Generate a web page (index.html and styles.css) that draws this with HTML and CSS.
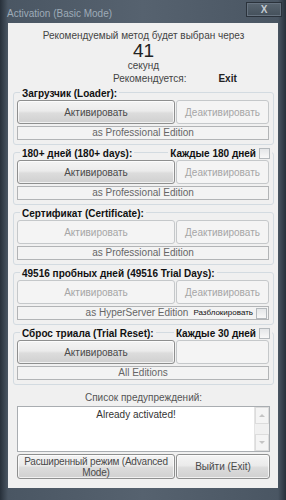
FILE: index.html
```html
<!DOCTYPE html>
<html lang="ru">
<head>
    <meta charset="UTF-8">
    <title>Activation (Basic Mode)</title>
    <link rel="stylesheet" href="styles.css">
</head>
<body>
    <div class="window">
        <div class="titlebar">
            <span class="title">Activation (Basic Mode)</span>
            <span class="close">X</span>
        </div>

        <div class="client">
            <div class="countdown">
                <div class="line">Рекомендуемый метод будет выбран через</div>
                <div class="seconds">41</div>
                <div class="line">секунд</div>
                <div class="recommend">
                    <span>Рекомендуется:</span>
                    <b>Exit</b>
                </div>
            </div>

            <div class="group">
                <div class="group-head">
                    <span class="legend">Загрузчик (Loader):</span>
                </div>
                <div class="btn-row">
                    <button class="btn btn-main">Активировать</button>
                    <button class="btn btn-side" disabled>Деактивировать</button>
                </div>
                <div class="edition">as Professional Edition</div>
            </div>

            <div class="group">
                <div class="group-head">
                    <span class="legend">180+ дней (180+ days):</span>
                    <span class="legend check-label">Каждые 180 дней <span class="checkbox"></span></span>
                </div>
                <div class="btn-row">
                    <button class="btn btn-main">Активировать</button>
                    <button class="btn btn-side" disabled>Деактивировать</button>
                </div>
                <div class="edition">as Professional Edition</div>
            </div>

            <div class="group">
                <div class="group-head">
                    <span class="legend">Сертификат (Certificate):</span>
                </div>
                <div class="btn-row">
                    <button class="btn btn-main" disabled>Активировать</button>
                    <button class="btn btn-side" disabled>Деактивировать</button>
                </div>
                <div class="edition">as Professional Edition</div>
            </div>

            <div class="group">
                <div class="group-head">
                    <span class="legend">49516 пробных дней (49516 Trial Days):</span>
                </div>
                <div class="btn-row">
                    <button class="btn btn-main" disabled>Активировать</button>
                    <button class="btn btn-side" disabled>Деактивировать</button>
                </div>
                <div class="edition edition-unlock">
                    as HyperServer Edition
                    <span class="unlock">Разблокировать <span class="checkbox"></span></span>
                </div>
            </div>

            <div class="group">
                <div class="group-head">
                    <span class="legend">Сброс триала (Trial Reset):</span>
                    <span class="legend check-label">Каждые 30 дней <span class="checkbox"></span></span>
                </div>
                <div class="btn-row">
                    <button class="btn btn-main">Активировать</button>
                    <button class="btn btn-side" disabled></button>
                </div>
                <div class="edition">All Editions</div>
            </div>

            <div class="warnings-title">Список предупреждений:</div>
            <div class="warnings">
                <div class="warnings-text">Already activated!</div>
                <div class="scrollbar">
                    <span class="arrow arrow-up"></span>
                    <span class="track"></span>
                    <span class="arrow arrow-down"></span>
                </div>
            </div>

            <div class="btn-row bottom-row">
                <button class="btn btn-main">Расширенный режим (Advanced<br>Mode)</button>
                <button class="btn btn-side">Выйти (Exit)</button>
            </div>
        </div>
    </div>
</body>
</html>
```

FILE: styles.css
```css
body {
    margin: 0;
    background-color: #2e3741;
    font-family: 'Liberation Sans', Arial, sans-serif;
}
.window {
    width: 286px;
    height: 500px;
    background: linear-gradient(to right, #27303a 0px, #4a5663 8px, #56626f 50%, #4a5663 278px, #27303a 286px);
    overflow: hidden;
}
.titlebar {
    height: 23px;
    display: flex;
    align-items: flex-start;
    padding: 0 4px 0 7px;
    box-sizing: border-box;
}
.title {
    font-size: 10px;
    color: #9eabb8;
    margin-top: 8px;
}
.close {
    margin-left: auto;
    margin-top: 2px;
    width: 34px;
    height: 13px;
    border: 1px solid #2a323b;
    box-shadow: inset 0 0 0 1px #66727f;
    background: linear-gradient(#58646f, #44505b);
    color: #c4ccd4;
    font-size: 10px;
    font-weight: bold;
    text-align: center;
    line-height: 13px;
}
.client {
    margin: 0 8px;
    height: 465px;
    background-color: #f0f0f0;
    padding: 6px 4px 0 5px;
    box-sizing: border-box;
    color: #222;
}

/* countdown header */
.countdown {
    text-align: center;
    font-size: 10px;
    color: #444;
}
.countdown .line {
    line-height: 13px;
}
.seconds {
    font-size: 19px;
    line-height: 17px;
    color: #222;
}
.recommend {
    display: flex;
    line-height: 13px;
    padding-left: 100px;
    text-align: left;
}
.recommend b {
    margin-left: 32px;
    font-size: 10px;
    color: #222;
}

/* groups */
.group {
    margin-top: 7px;
    border: 1px solid #d3dbe1;
    border-radius: 3px;
    padding: 0 4px 4px 3px;
}
.group-head {
    display: flex;
    justify-content: space-between;
    align-items: center;
    height: 14px;
    margin-top: -7px;
}
.legend {
    background-color: #f0f0f0;
    font-size: 10px;
    font-weight: bold;
    color: #111;
    padding: 0 2px;
    margin-left: 3px;
}
.check-label {
    display: flex;
    align-items: center;
    gap: 3px;
    margin-left: 0;
    margin-right: -3px;
}
.checkbox {
    display: inline-block;
    width: 9px;
    height: 9px;
    border: 1px solid #b4b9bd;
    background: linear-gradient(#e4e6e8, #f8f8f8);
}
.btn-row {
    display: flex;
    gap: 1px;
}
.btn {
    height: 24px;
    padding: 0;
    font-family: inherit;
    font-size: 10px;
    color: #4a4a4a;
    border: 1px solid #8e8f8f;
    border-radius: 3px;
    background: linear-gradient(#f4f4f4 0%, #ebebeb 45%, #dcdcdc 55%, #d0d0d0 100%);
    box-shadow: inset 0 0 0 1px rgba(255, 255, 255, 0.7);
}
.btn:disabled {
    color: #a6a6a6;
    border-color: #c5c8ca;
    background: #f4f4f4;
    box-shadow: none;
}
.btn-main {
    width: 158px;
}
.btn-side {
    flex: 1;
}
.edition {
    margin-top: 2px;
    height: 14px;
    box-sizing: border-box;
    border: 1px solid #b2b4b6;
    background-color: #f3f3f3;
    font-size: 10px;
    line-height: 12px;
    color: #666;
    text-align: center;
}
.edition-unlock {
    position: relative;
    padding-right: 12px;
}
.unlock {
    position: absolute;
    right: 1px;
    top: 0;
    display: flex;
    align-items: center;
    gap: 3px;
    height: 12px;
    background-color: #f3f3f3;
    font-size: 8px;
    color: #111;
}

/* warnings list */
.warnings-title {
    margin-top: 6px;
    text-align: center;
    font-size: 10px;
    line-height: 13px;
    color: #555;
}
.warnings {
    margin: 2px 0 0 4px;
    width: 253px;
    height: 46px;
    box-sizing: border-box;
    border: 1px solid #a9adb1;
    background-color: #fff;
    display: flex;
}
.warnings-text {
    flex: 1;
    text-align: center;
    font-size: 10px;
    line-height: 13px;
    color: #333;
    padding-top: 1px;
}
.scrollbar {
    width: 14px;
    display: flex;
    flex-direction: column;
    background-color: #f0f0f0;
    border-left: 1px solid #e4e4e4;
}
.arrow {
    height: 15px;
    border: 1px solid #dcdcdc;
    background-color: #f4f4f4;
    display: flex;
    align-items: center;
    justify-content: center;
}
.arrow::before {
    content: "";
    border-left: 3px solid transparent;
    border-right: 3px solid transparent;
}
.arrow-up::before {
    border-bottom: 3px solid #c4c4c4;
}
.arrow-down::before {
    border-top: 3px solid #c4c4c4;
}
.track {
    flex: 1;
}
.bottom-row {
    margin: 2px 0 0 4px;
    width: 253px;
}
.bottom-row .btn {
    height: 25px;
    line-height: 11px;
}
.bottom-row .btn-main {
    padding: 0;
    white-space: nowrap;
    letter-spacing: -0.2px;
}
```
